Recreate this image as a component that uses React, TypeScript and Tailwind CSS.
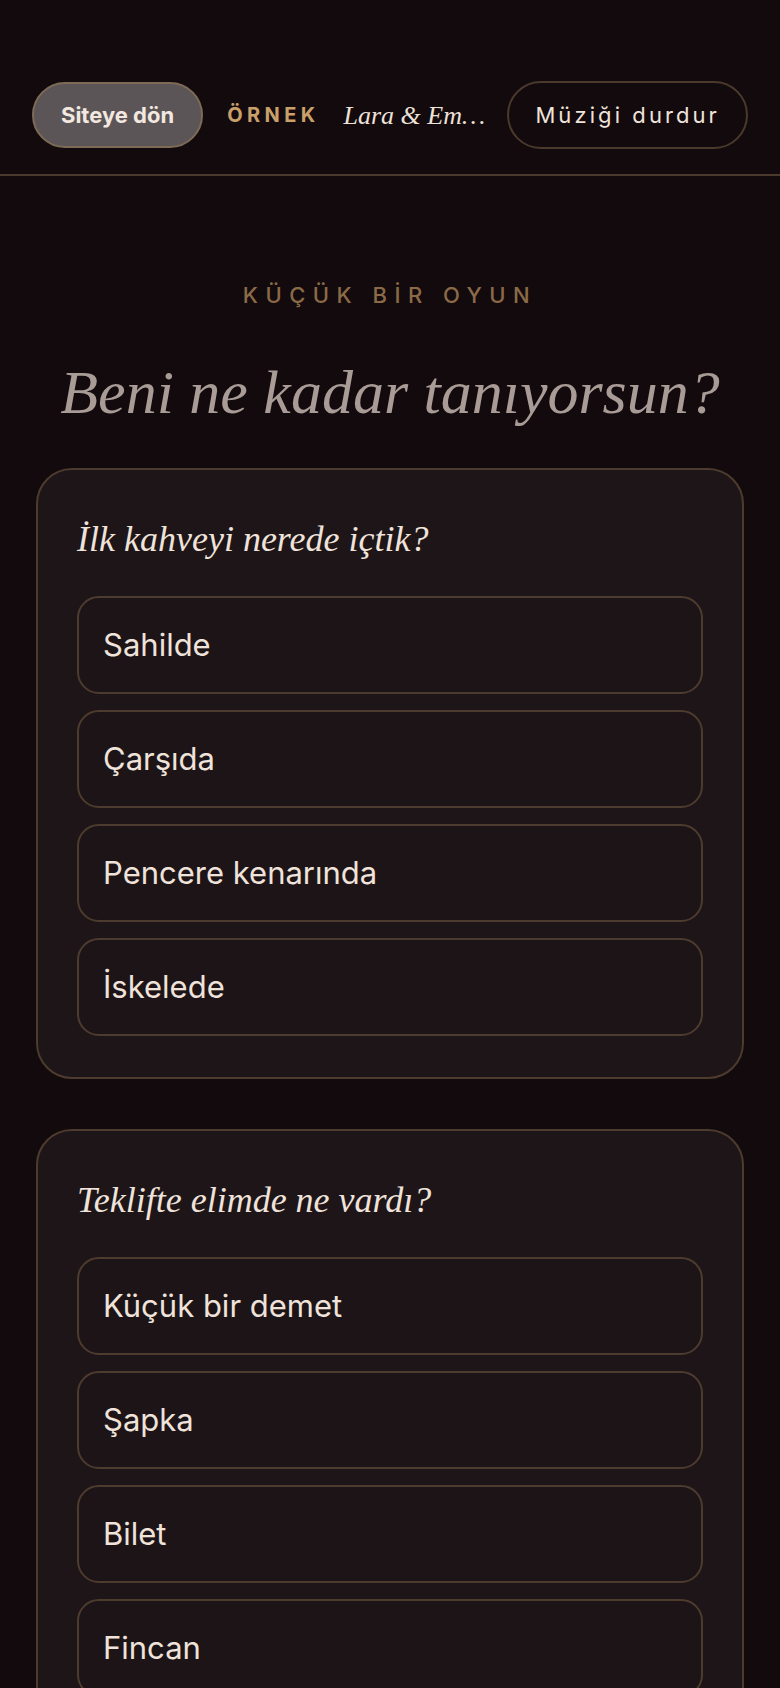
import React from "react";

interface Question {
  title: string;
  options: string[];
}

const questions: Question[] = [
  { title: "İlk kahveyi nerede içtik?", options: ["Sahilde", "Çarşıda", "Pencere kenarında", "İskelede"] },
  { title: "Teklifte elimde ne vardı?", options: ["Küçük bir demet", "Şapka", "Bilet", "Fincan"] },
];

const sans = "font-['Inter','Liberation_Sans',sans-serif]";
const serif = "font-['Liberation_Serif',serif]";

function QuestionCard({ q }: { q: Question }) {
  return (
    <div className="rounded-[36px] border-2 border-[#4d3c2d] bg-[#1e1519] px-[39px] pt-[48px] pb-[41px]">
      <h2 className={`${serif} italic text-[36px] leading-[43px] text-[#efe3da] mb-[35px]`}>{q.title}</h2>
      <div className="flex flex-col gap-[16px]">
        {q.options.map((opt) => (
          <button
            key={opt}
            className={`${sans} flex h-[98px] items-center rounded-[22px] border-2 border-[#4d3c2d] bg-[#1d1418] px-[24px] text-left text-[31px] text-[#efe3da]`}
          >
            {opt}
          </button>
        ))}
      </div>
    </div>
  );
}

export default function App() {
  return (
    <div className="min-h-[1688px] bg-[#130a0e]">
      <header className="flex items-center gap-[24px] border-b-2 border-[#4a3a2c] px-[32px] pt-[81px] pb-[25px]">
        <button
          className={`${sans} h-[66px] shrink-0 rounded-full border-2 border-[#7d6b55] bg-[#5b5557] px-[27px] text-[22px] font-bold text-[#f2e8e0]`}
        >
          Siteye dön
        </button>
        <span className={`${sans} shrink-0 text-[20px] font-bold tracking-[0.22em] text-[#c9a06a]`}>ÖRNEK</span>
        <span className={`${serif} min-w-0 flex-1 whitespace-nowrap italic text-[26px] text-[#eee2d8]`}>Lara &amp; Em…</span>
        <button
          className={`${sans} h-[68px] shrink-0 rounded-full border-2 border-[#4a3a2c] px-[26px] text-[22px] tracking-[0.14em] text-[#efe3da]`}
        >
          Müziği durdur
        </button>
      </header>

      <main className="px-[36px] pt-[105px] pb-[60px]">
        <p className={`${sans} text-center text-[22px] leading-[28px] font-medium tracking-[0.34em] text-[#8b6b47]`}>
          KÜÇÜK BİR OYUN
        </p>
        <h1 className={`${serif} mt-[47px] text-center italic text-[62px] leading-[72px] text-[#a99b95]`}>
          Beni ne kadar tanıyorsun?
        </h1>
        <div className="mt-[40px] flex flex-col gap-[50px]">
          {questions.map((q) => (
            <QuestionCard key={q.title} q={q} />
          ))}
        </div>
      </main>
    </div>
  );
}
